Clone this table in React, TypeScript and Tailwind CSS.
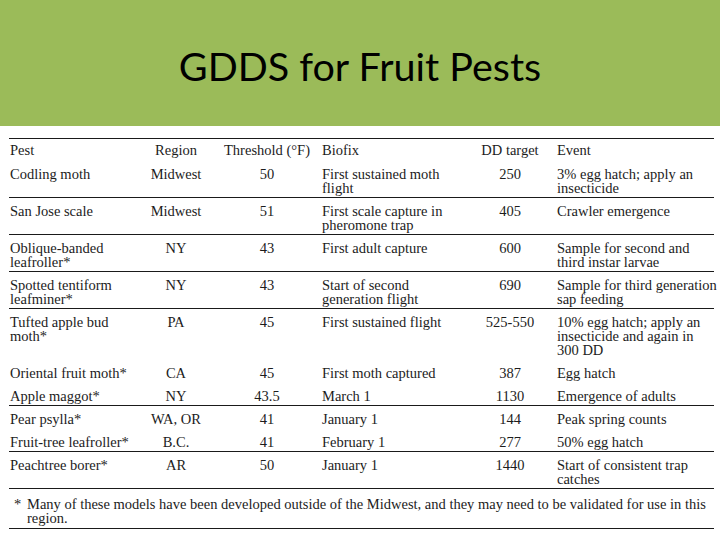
const rows = [
  { pest: ["Codling moth"], region: "Midwest", threshold: "50", biofix: ["First sustained moth", "flight"], dd: "250", event: ["3% egg hatch; apply an", "insecticide"], line: true },
  { pest: ["San Jose scale"], region: "Midwest", threshold: "51", biofix: ["First scale capture in", "pheromone trap"], dd: "405", event: ["Crawler emergence"], line: true },
  { pest: ["Oblique-banded", "leafroller*"], region: "NY", threshold: "43", biofix: ["First adult capture"], dd: "600", event: ["Sample for second and", "third instar larvae"], line: true },
  { pest: ["Spotted tentiform", "leafminer*"], region: "NY", threshold: "43", biofix: ["Start of second", "generation flight"], dd: "690", event: ["Sample for third generation", "sap feeding"], line: true },
  { pest: ["Tufted apple bud", "moth*"], region: "PA", threshold: "45", biofix: ["First sustained flight"], dd: "525-550", event: ["10% egg hatch; apply an", "insecticide and again in", "300 DD"], line: false },
  { pest: ["Oriental fruit moth*"], region: "CA", threshold: "45", biofix: ["First moth captured"], dd: "387", event: ["Egg hatch"], line: false },
  { pest: ["Apple maggot*"], region: "NY", threshold: "43.5", biofix: ["March 1"], dd: "1130", event: ["Emergence of adults"], line: true },
  { pest: ["Pear psylla*"], region: "WA, OR", threshold: "41", biofix: ["January 1"], dd: "144", event: ["Peak spring counts"], line: false },
  { pest: ["Fruit-tree leafroller*"], region: "B.C.", threshold: "41", biofix: ["February 1"], dd: "277", event: ["50% egg hatch"], line: true },
  { pest: ["Peachtree borer*"], region: "AR", threshold: "50", biofix: ["January 1"], dd: "1440", event: ["Start of consistent trap", "catches"], line: true },
];

const cols = "grid grid-cols-[131px_72px_110px_154px_68px_1fr]";

// multi-line cell kept as one text block with hard breaks
function Lines({ items, className = "" }: { items: string[]; className?: string }) {
  return (
    <div className={`whitespace-nowrap ${className}`}>
      {items.map((t, i) => (
        <span key={t}>
          {i > 0 && <br />}
          {t}
        </span>
      ))}
    </div>
  );
}

export default function App() {
  return (
    <div className="w-[720px] h-[540px] bg-white overflow-hidden">
      {/* Title band */}
      <div className="h-[126px] bg-[#9bbb59] flex items-center justify-center">
        <h1 className="font-['Lato',sans-serif] text-[39.5px] text-black leading-none mt-[6px]">
          GDDS for Fruit Pests
        </h1>
      </div>

      {/* Table */}
      <div className="mt-[12px] ml-[9px] w-[705px] border-t border-[#1a1a1a] font-['Liberation_Serif',serif] text-[14.5px] leading-[14px] text-[#1c1c1c]">
        <div className={`${cols} pt-[4px] pb-[3px] border-b border-transparent`}>
          <div className="pl-[1px]">Pest</div>
          <div className="text-center">Region</div>
          <div className="text-center">Threshold (°F)</div>
          <div>Biofix</div>
          <div className="text-center">DD target</div>
          <div className="pl-[13px]">Event</div>
        </div>

        {rows.map((r) => (
          <div
            key={r.pest[0]}
            className={`${cols} pt-[6px] pb-[2px] border-b ${r.line ? "border-[#1a1a1a]" : "border-transparent"}`}
          >
            <Lines items={r.pest} className="pl-[1px]" />
            <div className="text-center">{r.region}</div>
            <div className="text-center">{r.threshold}</div>
            <Lines items={r.biofix} />
            <div className="text-center">{r.dd}</div>
            <Lines items={r.event} className="pl-[13px]" />
          </div>
        ))}

        {/* Footnote */}
        <div className="flex pt-[8px] pb-[3px] border-b border-[#1a1a1a]">
          <span className="w-[18px] pl-[5px]">*</span>
          <Lines
            items={[
              "Many of these models have been developed outside of the Midwest, and they may need to be validated for use in this",
              "region.",
            ]}
          />
        </div>
      </div>
    </div>
  );
}
